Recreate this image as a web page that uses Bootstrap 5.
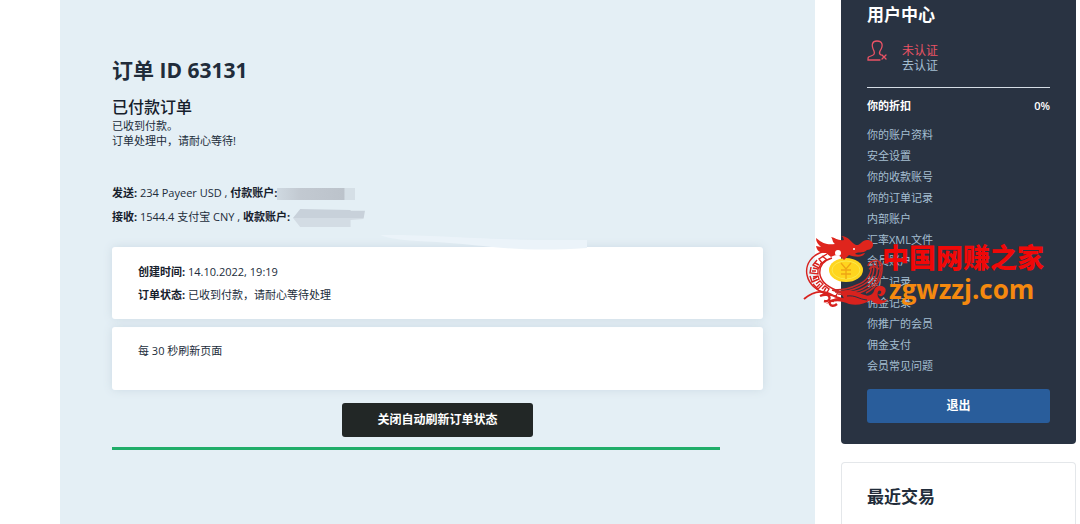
<!DOCTYPE html>
<html lang="zh-CN">
<head>
<meta charset="utf-8">
<meta name="viewport" content="width=device-width, initial-scale=1">
<title>订单 ID 63131</title>
<link href="https://cdn.jsdelivr.net/npm/bootstrap@5.3.0/dist/css/bootstrap.min.css" rel="stylesheet">
<style>
body{font-family:"Open Sans","Noto Sans CJK SC",sans-serif;font-size:11px;line-height:15px;color:#212c3a;background:#fff}
.page{padding-left:60px;padding-right:4px;gap:26px}
.order{background:#e4eff5;padding:56px 52px 24px}
.order h1{font-size:21px;line-height:28px;font-weight:700;margin-bottom:12px}
.order h2{font-size:16px;line-height:22px;font-weight:500;margin-bottom:0;color:#16202c}
.pay{margin-top:33px;line-height:24px}
.pay b,.panel b{font-weight:700;color:#16202c}
.redact{display:inline-block;vertical-align:middle;height:12px;width:78px;background:linear-gradient(90deg,#cfd9e1,#c2c9d1 30%,#bcc3cb 86%,#d5dfe6 87%)}
.redact-b{height:20px;width:72px;clip-path:polygon(10% 5%,80% 10%,80% 14%,100% 14%,98% 55%,80% 60%,80% 95%,10% 95%,0 50%);background:linear-gradient(#c8d1da 50%,#d3dce4 50%)}
.panel{background:#fff;border-radius:3px;box-shadow:0 0 10px #cddbe4;padding:13px 26px;margin-bottom:8px}
.panel-info{line-height:23px;margin-top:18px}
.smear{left:268px;top:-14px;width:208px;height:18px}
.panel-wait{min-height:63px;line-height:22px}
.btn-stop{background:#222726;color:#fff;font-size:12px;font-weight:700;line-height:18px;padding:8px 35px;border:0;border-radius:3px;margin-top:5px}
.meter{width:608px;max-width:100%}
.timer{height:3px;background:#20ad69;margin-top:10px}
.side{width:235px;flex:none}
.user-box{background:#293342;border-radius:0 0 4px 4px;padding:3px 26px 21px;color:#fff}
.side h3{font-size:17px;line-height:24px;font-weight:700;margin:0}
.verify{font-size:12px;line-height:15px;margin-top:16px;gap:14px}
.verify svg{width:21px;height:24px;flex:none;margin-top:-4px}
.bad{color:#ea5365}
.side a{color:#a5bfd2;text-decoration:none}
.rule{border-top:1px solid #d5dde5;margin-top:14px}
.discount{font-weight:600;line-height:20px;margin-top:8px}
.links{line-height:21px;margin:8px 0 0}
.btn-out{background:#295d9b;color:#fff;border:0;border-radius:3px;font-size:12px;font-weight:700;line-height:18px;padding:8px;margin-top:13px}
.recent{border:1px solid #e4e7ea;border-bottom:0;border-radius:4px 4px 0 0;margin-top:18px;padding:22px 25px 0}
.stamp{left:-38px;top:234px;pointer-events:none}
.stamp svg{width:88px;height:74px;flex:none}
.stamp-text{margin-left:-9px}
.stamp-cn{font-size:27px;line-height:36px;font-weight:900;color:#f00808;margin-top:6px}
.stamp-url{font-size:26px;line-height:26px;font-weight:700;color:#f5890f;padding-left:7px}
</style>
</head>
<body>
<div class="page d-flex min-vh-100">
  <main class="order flex-grow-1">
    <h1>订单 ID 63131</h1>
    <h2>已付款订单</h2>
    <div>已收到付款。<br>订单处理中，请耐心等待!</div>
    <div class="pay">
      <div><b>发送:</b> 234 Payeer USD , <b>付款账户:</b><span class="redact"></span></div>
      <div><b>接收:</b> 1544.4 支付宝 CNY , <b>收款账户:</b> <span class="redact redact-b"></span></div>
    </div>
    <section class="panel panel-info position-relative">
      <svg class="smear position-absolute" viewBox="0 0 208 18"><path d="M0 2C50 1 110 8 207 7v8c-70 5-100-3-150-6C30 8 10 6 0 2z" fill="#ebf3f9"/></svg>
      <div><b>创建时间:</b> 14.10.2022, 19:19</div>
      <div><b>订单状态:</b> 已收到付款，请耐心等待处理</div>
    </section>
    <section class="panel panel-wait">每 30 秒刷新页面</section>
    <div class="text-center"><button type="button" class="btn btn-stop">关闭自动刷新订单状态</button></div>
    <div class="meter"><div class="timer"></div></div>
  </main>
  <aside class="side position-relative d-flex flex-column">
    <div class="user-box">
      <h3>用户中心</h3>
      <div class="verify d-flex">
        <svg viewBox="0 0 21 24" fill="none" stroke="#ea5365" stroke-width="1.3" stroke-linecap="round"><path d="M14 16c-2-1-2-2-1-4 4-6 2-10-3-10S4 6 7 12c1 3 0 4-3 5-3 1-3 1-3 4h12M15 16l4 4M19 16l-4 4"/></svg>
        <div><div class="bad">未认证</div><a href="#">去认证</a></div>
      </div>
      <div class="rule"></div>
      <div class="discount d-flex justify-content-between"><span>你的折扣</span><span>0%</span></div>
      <ul class="links list-unstyled">
        <li><a href="#">你的账户资料</a></li>
        <li><a href="#">安全设置</a></li>
        <li><a href="#">你的收款账号</a></li>
        <li><a href="#">你的订单记录</a></li>
        <li><a href="#">内部账户</a></li>
        <li><a href="#">汇率XML文件</a></li>
        <li><a href="#">会员账户</a></li>
        <li><a href="#">推广记录</a></li>
        <li><a href="#">佣金记录</a></li>
        <li><a href="#">你推广的会员</a></li>
        <li><a href="#">佣金支付</a></li>
        <li><a href="#">会员常见问题</a></li>
      </ul>
      <button type="button" class="btn btn-out w-100">退出</button>
    </div>
    <div class="recent flex-grow-1"><h3>最近交易</h3></div>
    <div class="stamp position-absolute d-flex text-nowrap">
      <svg viewBox="0 0 88 74" fill="none">
        <g stroke="#d8221e" stroke-width="1.4">
          <path d="M23 17C8 20 2 31 4 41c2 10 10 16 22 20M29 24c-10 3-13 10-12 17 2 8 9 13 19 16"/>
          <path d="M24 20l-8 5 3 4 5-4M14 26l-4 5 6 3 2-5M8 33l-1 6 8 1v-5l-5-1M7 42l2 6 7-3-1-3-5 1M10 50l5 5 5-5-3-3-4 3M17 57l6 3 3-5-4-3-3 3M25 61l8 1 2-4-6-2"/>
          <path d="M19 22l4 3M12 29l4 2M9 37h4M10 45l4-2M14 53l3-3M21 57l2-3"/>
        </g>
        <g stroke="#c82a28" stroke-width="1.5">
          <path d="M68 32c1 8-5 16-14 19-8 4-16 5-22 5M70 29c3 11-3 19-14 24-8 4-16 5-24 5M73 28c4 12-2 21-14 27-8 4-18 4-26 3M76 28c4 12-2 23-15 29-8 4-18 4-26 3M79 31c1 12-5 22-16 28"/>
          <path d="M65 32c1-5 8-7 12-4 3 2 2 6 1 8M66 35l5-3 5 3"/>
        </g>
        <ellipse cx="43" cy="36" rx="17" ry="12" fill="#ffd51e"/>
        <ellipse cx="43" cy="36" rx="14" ry="9" stroke="#fae84d" stroke-width="1"/>
        <path d="M38 29l5 6 5-6M43 35v10M38 36h10M38 40h10" stroke="#efa414" stroke-width="1.3"/>
        <path d="M13 4c7 6 12 7 19 6-3-2-2-5-4-7 5 1 7 4 13 3-1-2 0-3-3-4 8 0 10 7 15 9 4 1 6-5 11-5 8 0 8 9 0 10-4 4-10 1-12 4 5 2 8-1 10-1-2 5-10 4-16 2l-5 5c-4-5-8-6-13-3l-5-4c-6 0-9-2-10-7l5 1c-3-3-5-5-5-9z" fill="#df251d"/>
        <circle cx="35" cy="19" r="3" fill="#fff"/><circle cx="51" cy="15" r="1" fill="#fff"/>
        <path d="M1 65c12-10 21-8 30-3 10 5 18 5 27-2" stroke="#d8221e" stroke-width="2"/>
        <path d="M37 58c10-4 18 1 25 3 4 2 8-1 9-4 2-9 15-5 11 2-2 4-6 4-7 1 2 1 4-1 3-3-3-2-4 2-3 6 3 5 8 4 10 1-2 7-13 8-17 2-7 4-14 6-22 4-8-3-13-4-23 0 6-6 12-7 18-5-1-3-2-5-4-7z" fill="#d8221e"/>
        <path d="M17 62c12-5 12 7 4 5M31 67c-8-2-4 9 3 3" stroke="#d8221e" stroke-width="2.4"/>
        <path d="M44 62c9-1 11 3 20 4" stroke="#293342" stroke-width="1"/>
      </svg>
      <div class="stamp-text"><div class="stamp-cn">中国网赚之家</div><div class="stamp-url">zgwzzj.com</div></div>
    </div>
  </aside>
</div>
<script src="https://cdn.jsdelivr.net/npm/bootstrap@5.3.0/dist/js/bootstrap.bundle.min.js"></script>
</body>
</html>
